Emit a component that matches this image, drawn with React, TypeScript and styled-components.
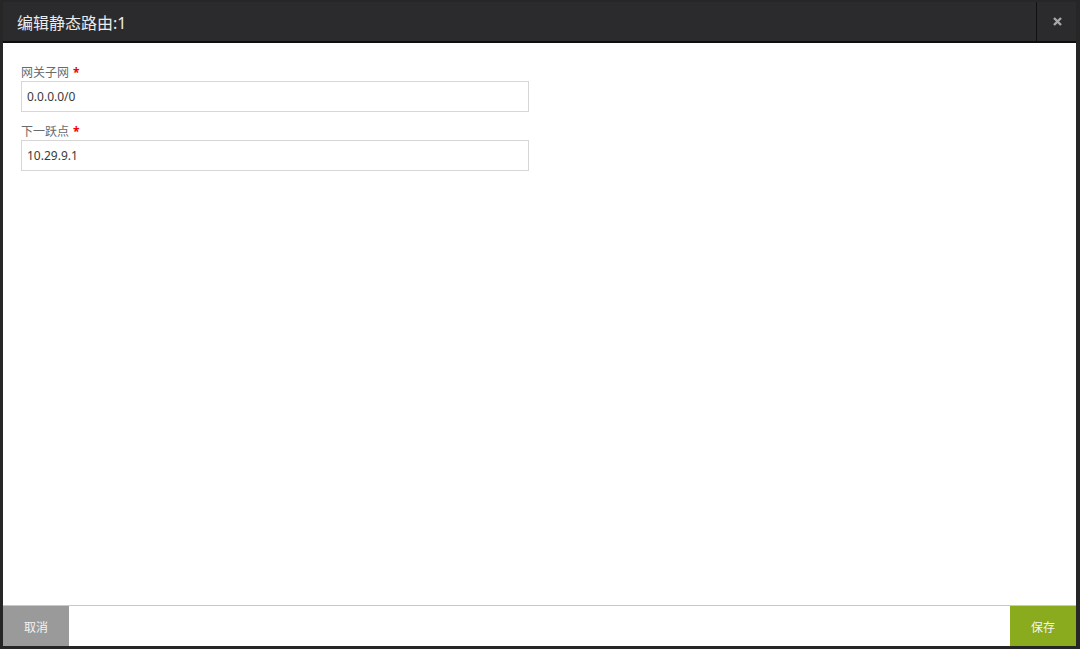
import React from "react";
import styled, { createGlobalStyle } from "styled-components";

const Global = createGlobalStyle`
  html, body { margin: 0; padding: 0; background: #2a2a2a; }
  body { font-family: "Noto Sans", "Noto Sans CJK SC", sans-serif; }
  * { box-sizing: border-box; }
`;

const Backdrop = styled.div`
  width: 1080px;
  height: 649px;
  background: #262626;
  padding: 2px 4px 3px 3px;
  display: flex;
`;

const Modal = styled.div`
  flex: 1;
  display: flex;
  flex-direction: column;
  background: #fff;
`;

const Header = styled.div`
  height: 41px;
  display: flex;
  align-items: stretch;
  background: #2b2b2d;
  border-bottom: 2px solid #0e0e0e;
`;

const Title = styled.h1`
  flex: 1;
  margin: 0;
  padding: 0 14px;
  display: flex;
  align-items: center;
  font-size: 16px;
  font-weight: 400;
  color: #ececec;
`;

const Close = styled.button`
  width: 40px;
  border: none;
  border-left: 1px solid #111;
  background: #2b2b2d;
  color: #a8a8a8;
  display: flex;
  align-items: center;
  justify-content: center;
  padding: 0 0 0 2px;
  cursor: pointer;
`;

const Body = styled.div`
  flex: 1;
  padding: 22px 18px;
  display: flex;
  flex-direction: column;
  gap: 12px;
`;

const Field = styled.div`
  display: flex;
  flex-direction: column;
  width: 508px;
`;

const Label = styled.label`
  font-size: 12px;
  line-height: 16px;
  color: #6a6a6a;
`;

const Req = styled.span`
  color: #e00;
  font-weight: 700;
  margin-left: 4px;
`;

const Input = styled.input`
  height: 31px;
  border: 1px solid #d6d6d6;
  padding: 0 5px;
  font-family: "Noto Sans", sans-serif;
  font-size: 12px;
  color: #3a3a3a;
  outline: none;
`;

const Footer = styled.div`
  height: 41px;
  display: flex;
  justify-content: space-between;
  border-top: 1px solid #c8c8c8;
`;

const Btn = styled.button<{ $bg: string }>`
  width: 66px;
  border: none;
  background: ${(p) => p.$bg};
  color: #f4f4f4;
  font-family: "Noto Sans CJK SC", sans-serif;
  font-size: 12px;
  cursor: pointer;
`;

export default function App() {
  return (
    <>
      <Global />
      <Backdrop>
        <Modal>
          <Header>
            <Title>编辑静态路由:1</Title>
            <Close aria-label="close">
              <svg width="9" height="9" viewBox="0 0 9 9">
                <path d="M1 1L8 8M8 1L1 8" stroke="#a8a8a8" strokeWidth="2.4" strokeLinecap="butt" />
              </svg>
            </Close>
          </Header>
          <Body>
            <Field>
              <Label>
                网关子网<Req>*</Req>
              </Label>
              <Input defaultValue="0.0.0.0/0" />
            </Field>
            <Field>
              <Label>
                下一跃点<Req>*</Req>
              </Label>
              <Input defaultValue="10.29.9.1" />
            </Field>
          </Body>
          <Footer>
            <Btn $bg="#9a9a9a">取消</Btn>
            <Btn $bg="#8aab1e">保存</Btn>
          </Footer>
        </Modal>
      </Backdrop>
    </>
  );
}
